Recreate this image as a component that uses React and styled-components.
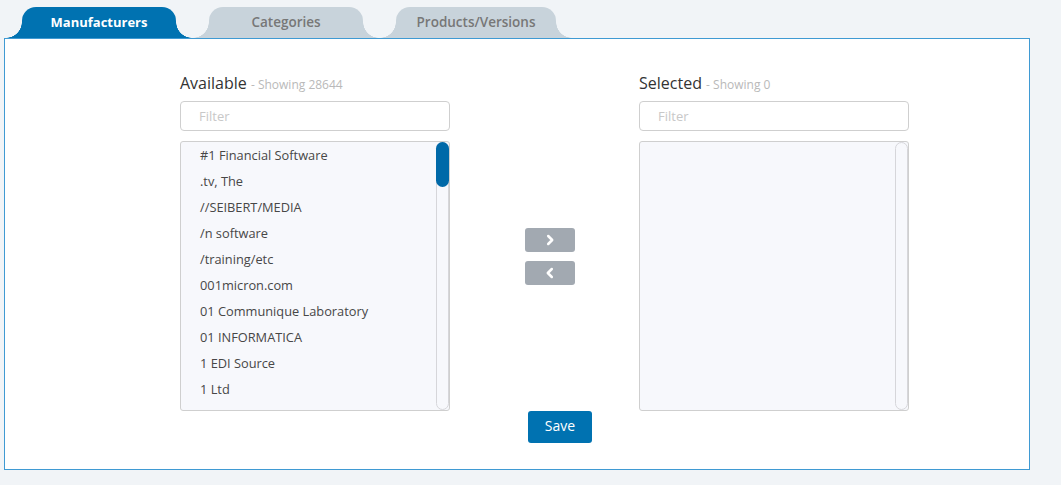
import React from "react";
import styled, { createGlobalStyle } from "styled-components";

const Global = createGlobalStyle`
  html, body { margin: 0; padding: 0; background: #f1f4f7; }
  body { font-family: "Open Sans", "Noto Sans", sans-serif; color: #333; }
  * { box-sizing: border-box; }
`;

const Page = styled.div`
  padding: 7px 0 0 4px;
  width: 1061px;
  height: 485px;
`;

const TabsRow = styled.div`
  display: flex;
  gap: 33px;
  padding-left: 18px;
  height: 31px;
`;

const Tab = styled.div`
  position: relative;
  width: ${(p) => p.$w}px;
  height: 31px;
  border-radius: 14px 14px 0 0;
  background: ${(p) => (p.$active ? "#0072b1" : "#c8d3db")};
  color: ${(p) => (p.$active ? "#ffffff" : "#777777")};
  font-size: ${(p) => (p.$active ? 13 : 13.5)}px;
  font-weight: ${(p) => (p.$active ? 700 : 600)};
  line-height: 18px;
  display: flex;
  align-items: center;
  justify-content: center;
  padding-bottom: 2px;
  &::before, &::after {
    content: "";
    position: absolute;
    bottom: 0;
    width: 16px;
    height: 16px;
  }
  &::before {
    left: -16px;
    background: radial-gradient(circle at 0 0, transparent 15.5px, ${(p) => (p.$active ? "#0072b1" : "#c8d3db")} 16px);
  }
  &::after {
    right: -16px;
    background: radial-gradient(circle at 100% 0, transparent 15.5px, ${(p) => (p.$active ? "#0072b1" : "#c8d3db")} 16px);
  }
`;

const Panel = styled.div`
  width: 1026px;
  height: 432px;
  background: #fff;
  border: 1px solid #3f9ad3;
  padding: 33px 0 0 175px;
`;

const Columns = styled.div`
  display: flex;
  align-items: flex-start;
`;

const Column = styled.div`
  width: 270px;
  display: flex;
  flex-direction: column;
`;

const Heading = styled.div`
  font-size: 16px;
  line-height: 20px;
  height: 20px;
  color: #333;
  white-space: nowrap;
  padding-top: 1px;
`;

const Count = styled.span`
  font-size: 12px;
  color: #b9b9b9;
`;

const Filter = styled.input`
  margin-top: 9px;
  width: 270px;
  height: 30px;
  border: 1px solid #cfcfcf;
  border-radius: 4px;
  padding: 0 0 0 18px;
  font-family: "Open Sans", sans-serif;
  font-size: 13px;
  color: #444;
  outline: none;
  &::placeholder { color: #c8c8c8; }
`;

const ListBox = styled.div`
  margin-top: 10px;
  height: 270px;
  border: 1px solid #cfcfcf;
  border-radius: 3px;
  background: #f7f8fc;
  display: flex;
  overflow: hidden;
`;

const Items = styled.div`
  flex: 1;
  overflow: hidden;
`;

const Item = styled.div`
  height: 26px;
  line-height: 26px;
  padding-left: 19px;
  font-size: 12.8px;
  color: #474747;
  white-space: nowrap;
`;

const Track = styled.div`
  width: 13px;
  height: 100%;
  border: 1px solid #d6d6da;
  border-radius: 7px;
  background: #f7f8fc;
  display: flex;
  flex-direction: column;
`;

const Thumb = styled.div`
  height: 45px;
  margin: -1px;
  border-radius: 7px;
  background: #0069a8;
`;

const Middle = styled.div`
  margin: 156px 64px 0 75px;
  display: flex;
  flex-direction: column;
  gap: 9px;
`;

const MoveButton = styled.button`
  width: 50px;
  height: 24px;
  border: 0;
  border-radius: 3px;
  background: #a2a9b1;
  display: flex;
  align-items: center;
  justify-content: center;
  padding: 0;
  cursor: pointer;
`;

const SaveRow = styled.div`
  padding-left: 348px;
`;

const SaveButton = styled.button`
  width: 64px;
  height: 32px;
  border: 0;
  border-radius: 3px;
  background: #0072b1;
  color: #fff;
  font-family: "Open Sans", sans-serif;
  font-size: 14px;
  line-height: 20px;
  padding: 0 0 2px;
  cursor: pointer;
`;

const Chevron = ({ dir }) => (
  <svg width="10" height="12" viewBox="0 0 10 12">
    <path
      d={dir === "right" ? "M3.2 2 L7.2 6 L3.2 10" : "M6.8 2 L2.8 6 L6.8 10"}
      fill="none"
      stroke="#fff"
      strokeWidth="2.5"
      strokeLinecap="round"
      strokeLinejoin="round"
    />
  </svg>
);

const available = [
  "#1 Financial Software",
  ".tv, The",
  "//SEIBERT/MEDIA",
  "/n software",
  "/training/etc",
  "001micron.com",
  "01 Communique Laboratory",
  "01 INFORMATICA",
  "1 EDI Source",
  "1 Ltd",
];

export default function App() {
  return (
    <>
      <Global />
      <Page>
        <TabsRow>
          <Tab $active $w={154}>Manufacturers</Tab>
          <Tab $w={154}>Categories</Tab>
          <Tab $w={160}>Products/Versions</Tab>
        </TabsRow>
        <Panel>
          <Columns>
            <Column>
              <Heading>
                Available <Count>- Showing 28644</Count>
              </Heading>
              <Filter placeholder="Filter" />
              <ListBox>
                <Items>
                  {available.map((a) => (
                    <Item key={a}>{a}</Item>
                  ))}
                </Items>
                <Track>
                  <Thumb />
                </Track>
              </ListBox>
            </Column>
            <Middle>
              <MoveButton aria-label="Add">
                <Chevron dir="right" />
              </MoveButton>
              <MoveButton aria-label="Remove">
                <Chevron dir="left" />
              </MoveButton>
            </Middle>
            <Column>
              <Heading>
                Selected <Count>- Showing 0</Count>
              </Heading>
              <Filter placeholder="Filter" />
              <ListBox>
                <Items />
                <Track />
              </ListBox>
            </Column>
          </Columns>
          <SaveRow>
            <SaveButton>Save</SaveButton>
          </SaveRow>
        </Panel>
      </Page>
    </>
  );
}
